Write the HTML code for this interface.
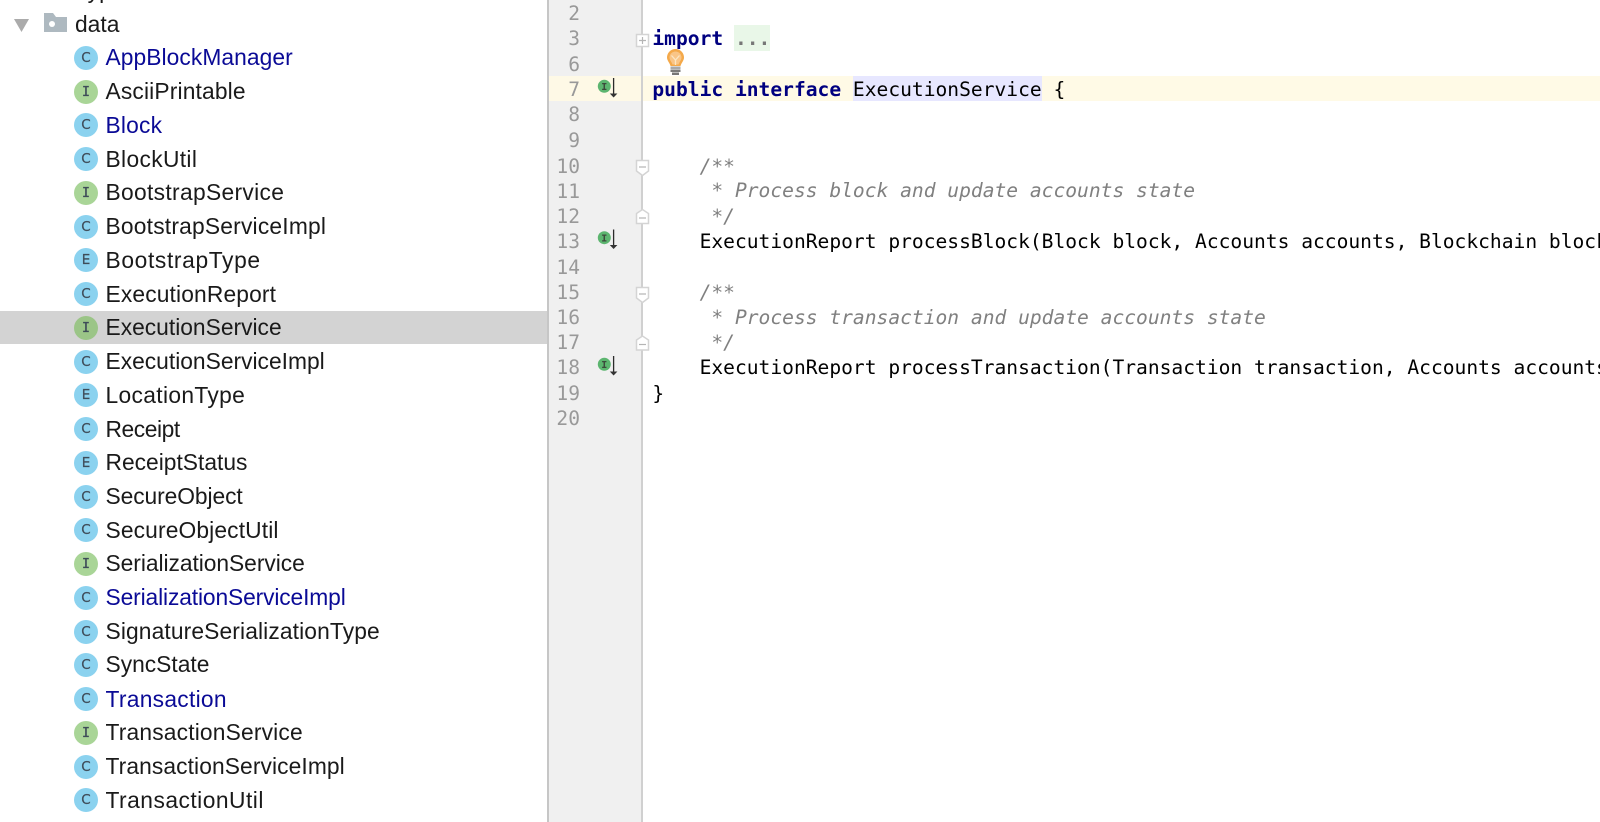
<!DOCTYPE html>
<html lang="en">
<head>
<meta charset="utf-8">
<title>ExecutionService</title>
<style>
html,body{margin:0;padding:0;background:#fff}
body{position:relative;width:1600px;height:822px;overflow:hidden;font-family:"Liberation Sans",sans-serif}
.abs{position:absolute}
.row{position:absolute;left:0;width:547px;height:33.75px;line-height:33.75px;font-size:22.8px;color:#1a1a1a;white-space:nowrap}
.row .t{position:absolute;left:105.5px;top:-.1px}
.row .d{top:.9px}
.row.b .t{color:#0a0a96}
.row.sel{background:#d3d3d3;height:33.4px}
.ic{position:absolute;left:74px;top:4.9px;width:24px;height:24px;border-radius:50%;background:#8bd2ef;color:#3f4c59;font-family:"DejaVu Sans",sans-serif;font-size:13.5px;line-height:24px;text-align:center;font-weight:normal;-webkit-text-stroke:.25px #3f4c59}
.ic.i{background:#a9d597;font-family:"DejaVu Sans Mono",monospace;font-size:13.5px}
.sel .ic.i{background:#9bc587}
#gutter{position:absolute;left:547px;top:0;width:92px;height:822px;background:#f0f0f0;border-left:2px solid #c6c6c6;border-right:2px solid #d0d0d0;box-sizing:content-box}
#cur-g{position:absolute;left:549px;top:76px;width:92px;height:25px;background:#fef9e6}
#cur-c{position:absolute;left:643px;top:76px;width:957px;height:25px;background:#fffae6}
#name-bg{position:absolute;left:853px;top:76px;width:189px;height:25px;background:#e7e7ff}
#fold-bg{position:absolute;left:734px;top:25px;width:36px;height:25.5px;background:#e9f7e8}
.ln,.cl{position:absolute;font-family:"DejaVu Sans Mono","Liberation Mono",monospace;font-size:19.6px;line-height:25px;white-space:pre}
.ln{left:549px;width:31px;text-align:right;color:#999}
.cl{left:652.4px;color:#000;width:948px;overflow:hidden}
.k{color:#000080;font-weight:bold}
.c{color:#808080;font-style:italic}
.c0{color:#777;font-weight:bold}
</style>
</head>
<body>

<div class="abs" style="left:75px;top:-26.4px;font-size:22.8px;line-height:33.75px;color:#1a1a1a">Type</div>
<svg class="abs" style="left:0;top:0" width="80" height="40">
<path d="M14 19H29L21.500 32Z" fill="#ababab"/>
<path d="M44 32V13H53L56 17H67V32Z" fill="#aeb9c0"/>
<circle cx="52" cy="24" r="3" fill="#fff"/>
</svg>
<div class="abs" style="left:75px;top:7.500px;font-size:22.8px;line-height:33.75px;color:#1a1a1a">data</div>

<div class="row b" style="top:41px"><span class="ic">C</span><span class="t" style="letter-spacing:.07px">AppBlockManager</span></div>
<div class="row" style="top:74.75px"><span class="ic i">I</span><span class="t" style="letter-spacing:.15px">AsciiPrintable</span></div>
<div class="row b" style="top:108.5px"><span class="ic">C</span><span class="t d" style="letter-spacing:.2px">Block</span></div>
<div class="row" style="top:142.25px"><span class="ic">C</span><span class="t d" style="letter-spacing:.34px">BlockUtil</span></div>
<div class="row" style="top:176px"><span class="ic i">I</span><span class="t" style="letter-spacing:.32px">BootstrapService</span></div>
<div class="row" style="top:209.75px"><span class="ic">C</span><span class="t" style="letter-spacing:.2px">BootstrapServiceImpl</span></div>
<div class="row" style="top:243.5px"><span class="ic">E</span><span class="t d" style="letter-spacing:.63px">BootstrapType</span></div>
<div class="row" style="top:277.25px"><span class="ic">C</span><span class="t d" style="letter-spacing:.14px">ExecutionReport</span></div>
<div class="row sel" style="top:311px"><span class="ic i">I</span><span class="t">ExecutionService</span></div>
<div class="row" style="top:344.75px"><span class="ic">C</span><span class="t">ExecutionServiceImpl</span></div>
<div class="row" style="top:378.5px"><span class="ic">E</span><span class="t d" style="letter-spacing:.34px">LocationType</span></div>
<div class="row" style="top:412.25px"><span class="ic">C</span><span class="t d" style="letter-spacing:-.43px">Receipt</span></div>
<div class="row" style="top:446px"><span class="ic">E</span><span class="t">ReceiptStatus</span></div>
<div class="row" style="top:479.75px"><span class="ic">C</span><span class="t" style="letter-spacing:-.08px">SecureObject</span></div>
<div class="row" style="top:513.5px"><span class="ic">C</span><span class="t d" style="letter-spacing:.13px">SecureObjectUtil</span></div>
<div class="row" style="top:547.25px"><span class="ic i">I</span><span class="t" style="letter-spacing:-.05px">SerializationService</span></div>
<div class="row b" style="top:581px"><span class="ic">C</span><span class="t" style="letter-spacing:-.13px">SerializationServiceImpl</span></div>
<div class="row" style="top:614.75px"><span class="ic">C</span><span class="t" style="letter-spacing:.12px">SignatureSerializationType</span></div>
<div class="row" style="top:648.5px"><span class="ic">C</span><span class="t">SyncState</span></div>
<div class="row b" style="top:682.25px"><span class="ic">C</span><span class="t d" style="letter-spacing:.28px">Transaction</span></div>
<div class="row" style="top:716px"><span class="ic i">I</span><span class="t" style="letter-spacing:.17px">TransactionService</span></div>
<div class="row" style="top:749.75px"><span class="ic">C</span><span class="t" style="letter-spacing:.09px">TransactionServiceImpl</span></div>
<div class="row" style="top:783.5px"><span class="ic">C</span><span class="t d" style="letter-spacing:.48px">TransactionUtil</span></div>

<div id="gutter"></div>
<div id="cur-g"></div>
<div id="cur-c"></div>
<div id="name-bg"></div>
<div id="fold-bg"></div>

<div class="ln" style="top:1px">2</div>
<div class="ln" style="top:26.3px">3</div>
<div class="ln" style="top:51.6px">6</div>
<div class="ln" style="top:76.9px">7</div>
<div class="ln" style="top:102.2px">8</div>
<div class="ln" style="top:127.5px">9</div>
<div class="ln" style="top:154px">10</div>
<div class="ln" style="top:179px">11</div>
<div class="ln" style="top:204.4px">12</div>
<div class="ln" style="top:228.7px">13</div>
<div class="ln" style="top:255px">14</div>
<div class="ln" style="top:280.3px">15</div>
<div class="ln" style="top:304.6px">16</div>
<div class="ln" style="top:330px">17</div>
<div class="ln" style="top:355.2px">18</div>
<div class="ln" style="top:380.5px">19</div>
<div class="ln" style="top:405.8px">20</div>

<div class="cl" style="top:26.3px"><span class="k">import</span> <span class="c0">...</span></div>
<div class="cl" style="top:76.9px"><span class="k">public interface</span> ExecutionService {</div>
<div class="cl c" style="top:154px">    /**</div>
<div class="cl c" style="top:178.1px">     * Process block and update accounts state</div>
<div class="cl c" style="top:204.4px">     */</div>
<div class="cl" style="top:228.7px">    ExecutionReport processBlock(Block block, Accounts accounts, Blockchain blockchain);</div>
<div class="cl c" style="top:280.3px">    /**</div>
<div class="cl c" style="top:304.6px">     * Process transaction and update accounts state</div>
<div class="cl c" style="top:330px">     */</div>
<div class="cl" style="top:355.2px">    ExecutionReport processTransaction(Transaction transaction, Accounts accounts);</div>
<div class="cl" style="top:380.5px">}</div>

<svg class="abs" style="left:0;top:0" width="800" height="430">
<g fill="#fff" stroke="#d4d4d4" stroke-width="1.5">
<rect x="636.500" y="34.500" width="12" height="12"/>
<path d="M636.500 160.500H648.500V171L642.500 175.500L636.500 171Z"/>
<path d="M636.500 223.500H648.500V213.500L642.500 209.500L636.500 213.500Z"/>
<path d="M636.500 287.500H648.500V298L642.500 302.500L636.500 298Z"/>
<path d="M636.500 350H648.500V340L642.500 336L636.500 340Z"/>
</g>
<g stroke="#b5b5b5" stroke-width="1.2" fill="none">
<path d="M639 40.500H646M642.500 37V44"/>
<path d="M639 167H646"/>
<path d="M639 218H646"/>
<path d="M639 294H646"/>
<path d="M639 344.500H646"/>
</g>
<g>
<path d="M667 57.500a8.500 8.500 0 1 1 17 0c0 3-2.500 5-3.500 8.500H670.500C669.500 62.500 667 60.500 667 57.500Z" fill="#f4a94a"/>
<path d="M669.500 57.500a6 6 0 1 1 12 0c0 2.500-2 4-3 7H672.500C671.500 61.500 669.500 60 669.500 57.500Z" fill="#f9c587"/>
<path d="M671.500 55.500L675.500 60L679.500 55.500M675.500 60V65" stroke="#fbe6c4" stroke-width="1.3" fill="none"/>
<rect x="670.500" y="66.500" width="10" height="2.500" fill="#a8a8a8"/>
<rect x="670.500" y="69.500" width="10" height="2.500" fill="#7a7a7a"/>
<rect x="672" y="72.500" width="7" height="2.500" fill="#777"/>
</g>
<g>
<circle cx="604.300" cy="86.300" r="6.500" fill="#5cb56f"/>
<text x="604.300" y="90" font-family="DejaVu Sans Mono" font-size="10" font-weight="bold" text-anchor="middle" fill="#3c4a3c">I</text>
<path d="M613.600 78V95" stroke="#2b2b2b" stroke-width="1.300"/>
<path d="M609.800 93.500H617.400L613.600 97.500Z" fill="#333"/>
</g>
<g>
<circle cx="604.300" cy="237.700" r="6.500" fill="#5cb56f"/>
<text x="604.300" y="241.400" font-family="DejaVu Sans Mono" font-size="10" font-weight="bold" text-anchor="middle" fill="#3c4a3c">I</text>
<path d="M613.600 229.500V246.500" stroke="#2b2b2b" stroke-width="1.300"/>
<path d="M609.800 245H617.400L613.600 249Z" fill="#333"/>
</g>
<g>
<circle cx="604.300" cy="364.300" r="6.500" fill="#5cb56f"/>
<text x="604.300" y="368" font-family="DejaVu Sans Mono" font-size="10" font-weight="bold" text-anchor="middle" fill="#3c4a3c">I</text>
<path d="M613.600 356V373" stroke="#2b2b2b" stroke-width="1.300"/>
<path d="M609.800 371.500H617.400L613.600 375.500Z" fill="#333"/>
</g>
</svg>

</body>
</html>
